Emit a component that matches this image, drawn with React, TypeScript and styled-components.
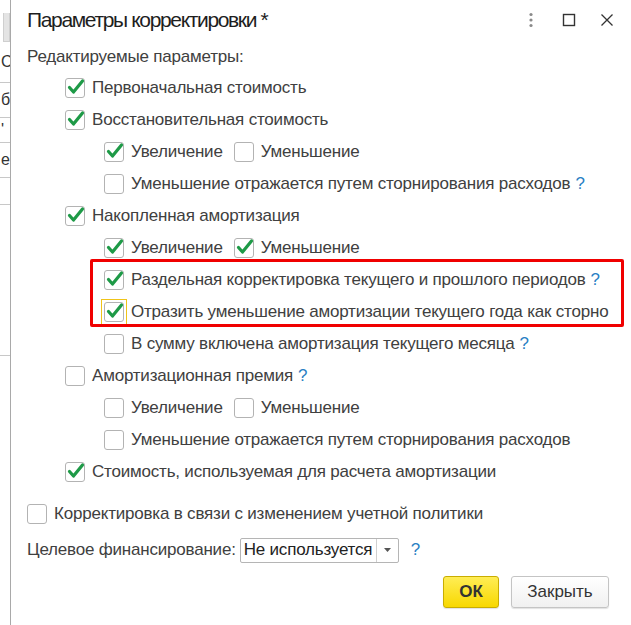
import React from 'react';
import styled, {createGlobalStyle} from "styled-components";

const GlobalStyle = createGlobalStyle`
    html, body {
        margin: 0;
        padding: 0;
        background: #ffffff;
    }
    body {
        font-family: "Liberation Sans", Arial, sans-serif;
        color: #404040;
    }
`

type RowData = {
    level: number
    items: Array<{ label: string, checked: boolean, focused?: boolean }>
    help?: boolean
}

const upperRows: Array<RowData> = [
    {level: 1, items: [{label: "Первоначальная стоимость", checked: true}]},
    {level: 1, items: [{label: "Восстановительная стоимость", checked: true}]},
    {level: 2, items: [{label: "Увеличение", checked: true}, {label: "Уменьшение", checked: false}]},
    {level: 2, items: [{label: "Уменьшение отражается путем сторнирования расходов", checked: false}], help: true},
    {level: 1, items: [{label: "Накопленная амортизация", checked: true}]},
    {level: 2, items: [{label: "Увеличение", checked: true}, {label: "Уменьшение", checked: true}]},
]

const markedRows: Array<RowData> = [
    {level: 2, items: [{label: "Раздельная корректировка текущего и прошлого периодов", checked: true}], help: true},
    {level: 2, items: [{label: "Отразить уменьшение амортизации текущего года как сторно", checked: true, focused: true}]},
]

const lowerRows: Array<RowData> = [
    {level: 2, items: [{label: "В сумму включена амортизация текущего месяца", checked: false}], help: true},
    {level: 1, items: [{label: "Амортизационная премия", checked: false}], help: true},
    {level: 2, items: [{label: "Увеличение", checked: false}, {label: "Уменьшение", checked: false}]},
    {level: 2, items: [{label: "Уменьшение отражается путем сторнирования расходов", checked: false}]},
    {level: 1, items: [{label: "Стоимость, используемая для расчета амортизации", checked: true}]},
]

function CheckBox(props: { checked: boolean, focused?: boolean }) {
    return (
        <BoxWrap $focused={props.focused}>
            <Box>
                {props.checked && (
                    <CheckMark viewBox="0 0 19 19">
                        <path d="M3.5 9.5 L7.5 14 L16.5 3" fill="none" stroke="#1e9a47" strokeWidth="3.2"
                              strokeLinecap="round" strokeLinejoin="round"/>
                    </CheckMark>
                )}
            </Box>
        </BoxWrap>
    )
}

function CheckRow(props: { row: RowData }) {
    const {level, items, help} = props.row
    return (
        <Row $level={level}>
            {items.map((item, i) => (
                <Item key={i}>
                    <CheckBox checked={item.checked} focused={item.focused}/>
                    <Label>{item.label}</Label>
                </Item>
            ))}
            {help && <Help>?</Help>}
        </Row>
    )
}

export default function App() {
    return (
        <>
            <GlobalStyle/>
            <Screen>
                <BackWindow>
                    <ScrollThumb/>
                    <BackCell $h={40}>С</BackCell>
                    <BackCell $h={34}>б</BackCell>
                    <BackCell $h={24}>'</BackCell>
                    <BackCell $h={34}>е</BackCell>
                    <BackCell $h={26}/>
                    <BackCell $h={150}/>
                </BackWindow>
                <Dialog>
                    <TitleBar>
                        <Title>Параметры корректировки *</Title>
                        <TitleTools>
                            <MoreIcon viewBox="0 0 6 16">
                                <circle cx="3" cy="2.5" r="1.6" fill="#8a8a8a"/>
                                <circle cx="3" cy="8" r="1.6" fill="#8a8a8a"/>
                                <circle cx="3" cy="13.5" r="1.6" fill="#8a8a8a"/>
                            </MoreIcon>
                            <ToolIcon viewBox="0 0 14 14">
                                <rect x="1.5" y="1.5" width="11" height="11" fill="none" stroke="#333" strokeWidth="1.4"/>
                            </ToolIcon>
                            <ToolIcon viewBox="0 0 14 14">
                                <path d="M1.5 1.5 L12.5 12.5 M12.5 1.5 L1.5 12.5" stroke="#333" strokeWidth="1.3"/>
                            </ToolIcon>
                        </TitleTools>
                    </TitleBar>
                    <Body>
                        <SectionLabel>Редактируемые параметры:</SectionLabel>
                        {upperRows.map((r, i) => <CheckRow key={i} row={r}/>)}
                        <Marked>
                            {markedRows.map((r, i) => <CheckRow key={i} row={r}/>)}
                            <RedFrame/>
                        </Marked>
                        {lowerRows.map((r, i) => <CheckRow key={i} row={r}/>)}
                        <PolicyRow>
                            <CheckRow row={{level: 0, items: [{label: "Корректировка в связи с изменением учетной политики", checked: false}]}}/>
                        </PolicyRow>
                        <FieldRow>
                            <Label>Целевое финансирование:</Label>
                            <Select>
                                <SelectValue>Не используется</SelectValue>
                                <SelectButton>
                                    <svg width="7" height="4" viewBox="0 0 7 4">
                                        <path d="M0 0 L7 0 L3.5 4 Z" fill="#555"/>
                                    </svg>
                                </SelectButton>
                            </Select>
                            <Help>?</Help>
                        </FieldRow>
                        <Footer>
                            <Button $primary>ОК</Button>
                            <Button>Закрыть</Button>
                        </Footer>
                    </Body>
                </Dialog>
            </Screen>
        </>
    )
}

const Screen = styled.div`
    display: flex;
    width: 631px;
    height: 625px;
    overflow: hidden;
`

const BackWindow = styled.div`
    width: 10px;
    flex-shrink: 0;
    display: flex;
    flex-direction: column;
    background: #ffffff;
    overflow: hidden;
`

const ScrollThumb = styled.div`
    margin: 13px 0 0 3px;
    width: 5px;
    height: 28px;
    background: #e4e4e4;
    border: 1px solid #cfcfcf;
    border-top: none;
`

const BackCell = styled.div<{ $h: number }>`
    height: ${p => p.$h}px;
    border-bottom: 1px solid #c8c8c8;
    font-size: 16px;
    line-height: ${p => p.$h}px;
    color: #333;
    text-indent: 1px;
    white-space: nowrap;
`

const Dialog = styled.div`
    flex: 1;
    display: flex;
    flex-direction: column;
    border-left: 1px solid #a9a9a9;
    background: #ffffff;
`

const TitleBar = styled.div`
    height: 42px;
    display: flex;
    align-items: center;
    justify-content: space-between;
    padding: 0 17px 0 16px;
`

const Title = styled.h1`
    margin: 0;
    font-size: 21px;
    letter-spacing: -1.35px;
    font-weight: 400;
    color: #1e1e1e;
    margin-top: -2px;
`

const TitleTools = styled.div`
    display: flex;
    align-items: center;
    gap: 24px;
    margin-top: -2px;
`

const MoreIcon = styled.svg`
    width: 6px;
    height: 16px;
    margin-right: 4px;
`

const ToolIcon = styled.svg`
    width: 14px;
    height: 14px;
`

const Body = styled.div`
    display: flex;
    flex-direction: column;
    padding: 0 16px;
`

const Label = styled.span`
    font-size: 17px;
    letter-spacing: -0.2px;
    color: #404040;
    white-space: nowrap;
`

const SectionLabel = styled(Label)`
    height: 30px;
    display: flex;
    align-items: center;
`

const Row = styled.div<{ $level: number }>`
    height: 32px;
    display: flex;
    align-items: center;
    padding-left: ${p => [0, 38, 77][p.$level]}px;
    gap: 11px;
`

const Item = styled.div`
    display: flex;
    align-items: center;
    gap: 7px;
`

const BoxWrap = styled.div<{ $focused?: boolean }>`
    display: flex;
    padding: 2px;
    border: 1px solid ${p => p.$focused ? "#f0c419" : "transparent"};
    margin: -3px;
`

const Box = styled.div`
    position: relative;
    width: 18px;
    height: 18px;
    border: 1px solid #b3b3b3;
    border-radius: 3px;
    background: #ffffff;
`

const CheckMark = styled.svg`
    position: absolute;
    left: 0;
    top: -1px;
    width: 19px;
    height: 19px;
    overflow: visible;
`

const Help = styled.span`
    font-size: 17px;
    color: #2a7fc4;
    margin-left: -6px;
`

const Marked = styled.div`
    position: relative;
    display: flex;
    flex-direction: column;
`

const RedFrame = styled.div`
    position: absolute;
    left: 63px;
    right: -9px;
    top: -5px;
    bottom: 1px;
    border: 3px solid #f00000;
    border-radius: 2px;
    pointer-events: none;
`

const PolicyRow = styled.div`
    margin-top: 10px;
`

const FieldRow = styled.div`
    margin-top: 4px;
    height: 32px;
    display: flex;
    align-items: center;
    gap: 4px;

    ${Help} {
        margin-left: 8px;
    }
`

const Select = styled.div`
    display: flex;
    height: 25px;
    border: 1px solid #b5b5b5;
    border-radius: 2px;
    box-sizing: border-box;
    width: 159px;
`

const SelectValue = styled.div`
    flex: 1;
    display: flex;
    align-items: center;
    padding-left: 3px;
    font-size: 17px;
    letter-spacing: -0.2px;
    color: #222;
    white-space: nowrap;
    overflow: hidden;
`

const SelectButton = styled.div`
    width: 21px;
    border-left: 1px solid #d0d0d0;
    display: flex;
    align-items: center;
    justify-content: center;
`

const Footer = styled.div`
    margin-top: 10px;
    display: flex;
    justify-content: flex-end;
    gap: 12px;
    padding-right: 6px;
`

const Button = styled.button<{ $primary?: boolean }>`
    height: 32px;
    padding: 0;
    width: ${p => p.$primary ? 56 : 98}px;
    border-radius: 3px;
    border: 1px solid ${p => p.$primary ? "#c9ad00" : "#c4c4c4"};
    background: ${p => p.$primary
        ? "linear-gradient(#ffed55, #f8d800)"
        : "linear-gradient(#ffffff, #f0f0f0)"};
    box-shadow: 0 1px 1px rgba(0, 0, 0, 0.12);
    font-family: "Liberation Sans", Arial, sans-serif;
    font-size: 17px;
    font-weight: ${p => p.$primary ? 700 : 400};
    color: #333;
`
